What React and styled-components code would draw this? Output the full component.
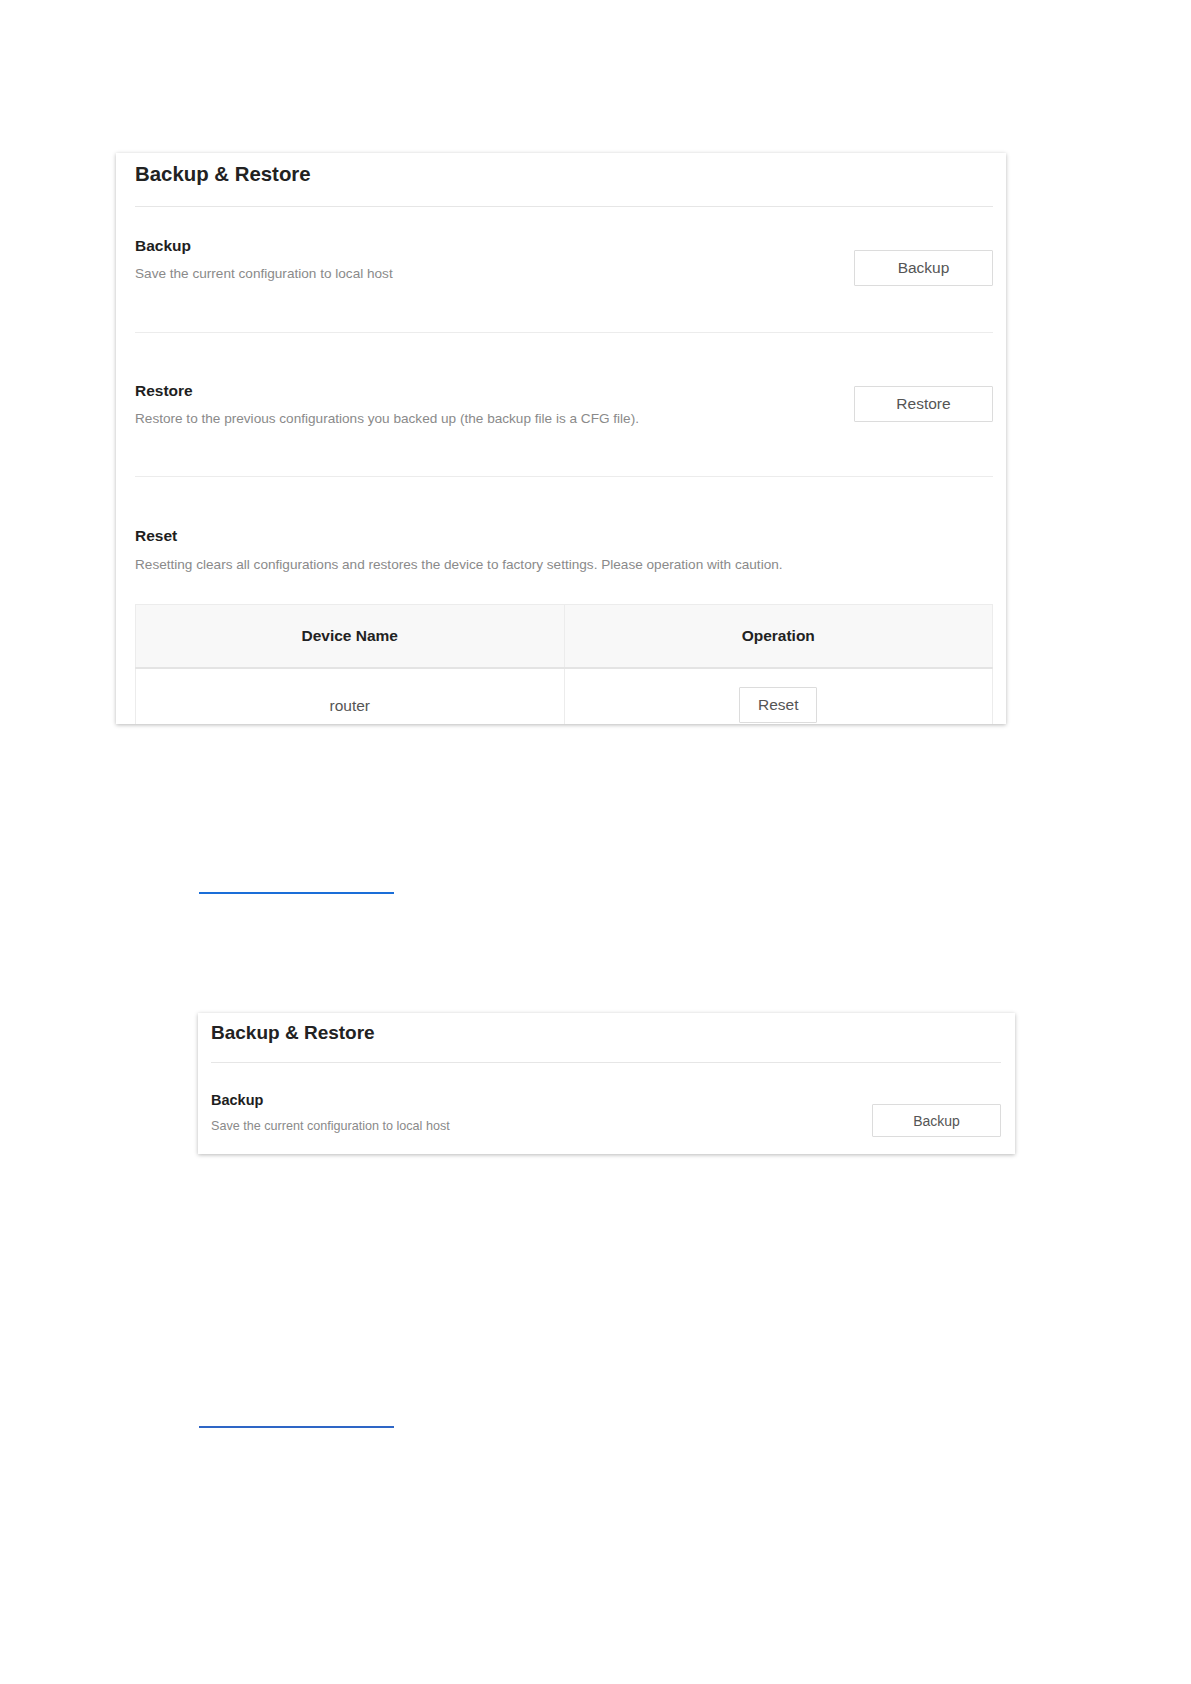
import React from "react";
import styled, { createGlobalStyle } from "styled-components";

const GlobalStyle = createGlobalStyle`
  html, body {
    margin: 0;
    padding: 0;
    background: #ffffff;
    font-family: "Liberation Sans", Arial, sans-serif;
  }
`;

const Page = styled.div`
  display: flex;
  flex-direction: column;
  align-items: flex-start;
  padding-top: 153px;
  min-height: 1684px;
  box-sizing: border-box;
`;

const Card = styled.div`
  margin-left: ${(p) => p.left}px;
  margin-top: ${(p) => p.top || 0}px;
  width: ${(p) => p.width}px;
  height: ${(p) => p.height}px;
  box-sizing: border-box;
  padding: 0 ${(p) => p.padRight}px 0 ${(p) => p.padLeft}px;
  background: #ffffff;
  box-shadow: 0 1px 4px rgba(0, 0, 0, 0.28);
  overflow: hidden;
`;

const Header = styled.div`
  padding: ${(p) => (p.small ? "9px 0 18px" : "9px 0 20px")};
  border-bottom: 1px solid #e6e6e6;
`;

const Title = styled.h2`
  margin: 0;
  font-size: ${(p) => (p.small ? "19px" : "20.4px")};
  line-height: ${(p) => (p.small ? "22px" : "24px")};
  font-weight: bold;
  color: #222222;
`;

const Section = styled.div`
  display: flex;
  align-items: flex-start;
  justify-content: space-between;
  padding: ${(p) => p.padTop}px 0 ${(p) => p.padBottom}px;
  border-bottom: ${(p) => (p.last ? "none" : "1px solid #ececec")};
`;

const Block = styled.div`
  display: flex;
  flex-direction: column;
  gap: 9px;
  flex: 1;
`;

const SubTitle = styled.h3`
  margin: 0;
  font-size: ${(p) => (p.small ? "14.5px" : "15.5px")};
  line-height: ${(p) => (p.small ? "18px" : "20px")};
  font-weight: bold;
  color: #1e1e1e;
`;

const Desc = styled.p`
  margin: 0;
  font-size: ${(p) => (p.small ? "12.6px" : "13.6px")};
  line-height: ${(p) => (p.small ? "16px" : "18px")};
  color: #8a8a8a;
`;

const Button = styled.button`
  margin-top: ${(p) => p.offset || 0}px;
  width: ${(p) => p.w}px;
  height: ${(p) => p.h}px;
  flex-shrink: 0;
  background: #ffffff;
  border: 1px solid #dcdcdc;
  border-radius: 1px;
  font-family: "Liberation Sans", Arial, sans-serif;
  font-size: ${(p) => p.fs || 15.5}px;
  color: #555555;
  padding: 0;
  cursor: pointer;
`;

const ResetBlock = styled.div`
  padding-top: 49px;
  display: flex;
  flex-direction: column;
  gap: 10px;
`;

const Table = styled.table`
  margin-top: 20px;
  width: 100%;
  border-collapse: collapse;
  table-layout: fixed;
`;

const Th = styled.th`
  height: 62px;
  padding: 0;
  background: #f8f8f8;
  border: 1px solid #ececec;
  border-bottom: 2px solid #e4e4e4;
  font-size: 15.5px;
  font-weight: bold;
  color: #222222;
  text-align: center;
`;

const Td = styled.td`
  height: 76px;
  border: 1px solid #ececec;
  text-align: center;
  font-size: 15.5px;
  color: #555555;
  vertical-align: top;
  padding: ${(p) => p.padTop}px 0 0;
`;

const Rule = styled.div`
  margin-left: 199px;
  margin-top: ${(p) => p.top}px;
  width: 195px;
  height: 2px;
  background: ${(p) => p.color};
`;

export default function App() {
  return (
    <>
      <GlobalStyle />
      <Page>
        <Card left={116} width={890} height={571} padLeft={19} padRight={13}>
          <Header>
            <Title>Backup &amp; Restore</Title>
          </Header>
          <Section padTop={29} padBottom={46}>
            <Block>
              <SubTitle>Backup</SubTitle>
              <Desc>Save the current configuration to local host</Desc>
            </Block>
            <Button offset={14} w={139} h={36}>Backup</Button>
          </Section>
          <Section padTop={48} padBottom={48}>
            <Block>
              <SubTitle>Restore</SubTitle>
              <Desc>
                Restore to the previous configurations you backed up (the backup file is a CFG file).
              </Desc>
            </Block>
            <Button offset={5} w={139} h={36}>Restore</Button>
          </Section>
          <ResetBlock>
            <SubTitle>Reset</SubTitle>
            <Desc>
              Resetting clears all configurations and restores the device to factory settings. Please operation with caution.
            </Desc>
            <Table>
              <thead>
                <tr>
                  <Th>Device Name</Th>
                  <Th>Operation</Th>
                </tr>
              </thead>
              <tbody>
                <tr>
                  <Td padTop={28}>router</Td>
                  <Td padTop={18}>
                    <Button w={78} h={36}>Reset</Button>
                  </Td>
                </tr>
              </tbody>
            </Table>
          </ResetBlock>
        </Card>

        <Rule top={168} color="#1a6ed8" />

        <Card left={198} top={119} width={817} height={141} padLeft={13} padRight={14}>
          <Header small>
            <Title small>Backup &amp; Restore</Title>
          </Header>
          <Section padTop={28} padBottom={20} last>
            <Block>
              <SubTitle small>Backup</SubTitle>
              <Desc small>Save the current configuration to local host</Desc>
            </Block>
            <Button offset={13} w={129} h={33} fs={14}>Backup</Button>
          </Section>
        </Card>

        <Rule top={272} color="#2e66c6" />
      </Page>
    </>
  );
}
